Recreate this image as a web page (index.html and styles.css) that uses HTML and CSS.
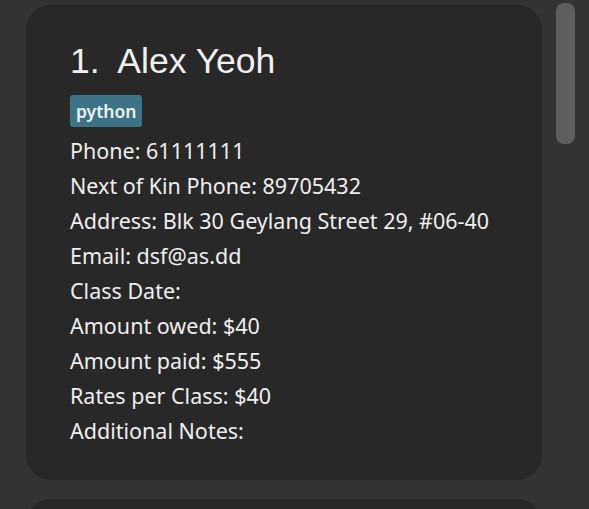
FILE: index.html
```html
<!DOCTYPE html>
<html>
<head>
<meta charset="utf-8">
<link rel="stylesheet" href="styles.css">
</head>
<body>
<div class="app">
  <div class="list">
    <div class="card">
      <div class="title">1.  Alex Yeoh</div>
      <div class="tags"><span class="tag">python</span></div>
      <div class="field">Phone: 61111111</div>
      <div class="field">Next of Kin Phone: 89705432</div>
      <div class="field">Address: Blk 30 Geylang Street 29, #06-40</div>
      <div class="field">Email: dsf@as.dd</div>
      <div class="field">Class Date: </div>
      <div class="field">Amount owed: $40</div>
      <div class="field">Amount paid: $555</div>
      <div class="field">Rates per Class: $40</div>
      <div class="field">Additional Notes: </div>
    </div>
    <div class="card card-next"></div>
  </div>
  <div class="track"><div class="thumb"></div></div>
</div>
</body>
</html>
```

FILE: styles.css
```css
html, body {
  margin: 0;
  padding: 0;
  background: #333333;
  overflow: hidden;
  height: 100%;
}
.app {
  display: flex;
  height: 509px;
  overflow: hidden;
}
.list {
  display: flex;
  flex-direction: column;
  gap: 19px;
  padding: 5px 0 0 26px;
  width: 516px;
  flex: none;
}
.card {
  background: #282828;
  border-radius: 25px;
  padding: 36px 20px 32px 44px;
  color: #eeeeee;
}
.card-next {
  flex: none;
  height: 300px;
}
.title {
  font-family: "Liberation Sans", Arial, sans-serif;
  font-size: 35.5px;
  line-height: 40px;
  color: #f0f0f0;
  white-space: pre;
}
.tags {
  display: flex;
  margin-top: 14px;
  margin-bottom: 6px;
}
.tag {
  background: #3c7387;
  color: #f2f2f2;
  border-radius: 3px;
  font-family: "Noto Sans", sans-serif;
  font-weight: 600;
  font-size: 17.5px;
  line-height: 32px;
  height: 32px;
  padding: 0 6px;
}
.field {
  font-family: "Noto Sans", sans-serif;
  font-size: 21.5px;
  line-height: 35px;
  white-space: pre;
}
.track {
  margin-left: 14px;
  padding-top: 3px;
}
.thumb {
  width: 19px;
  height: 141px;
  background: #5e5e5e;
  border-radius: 8px;
}
```
